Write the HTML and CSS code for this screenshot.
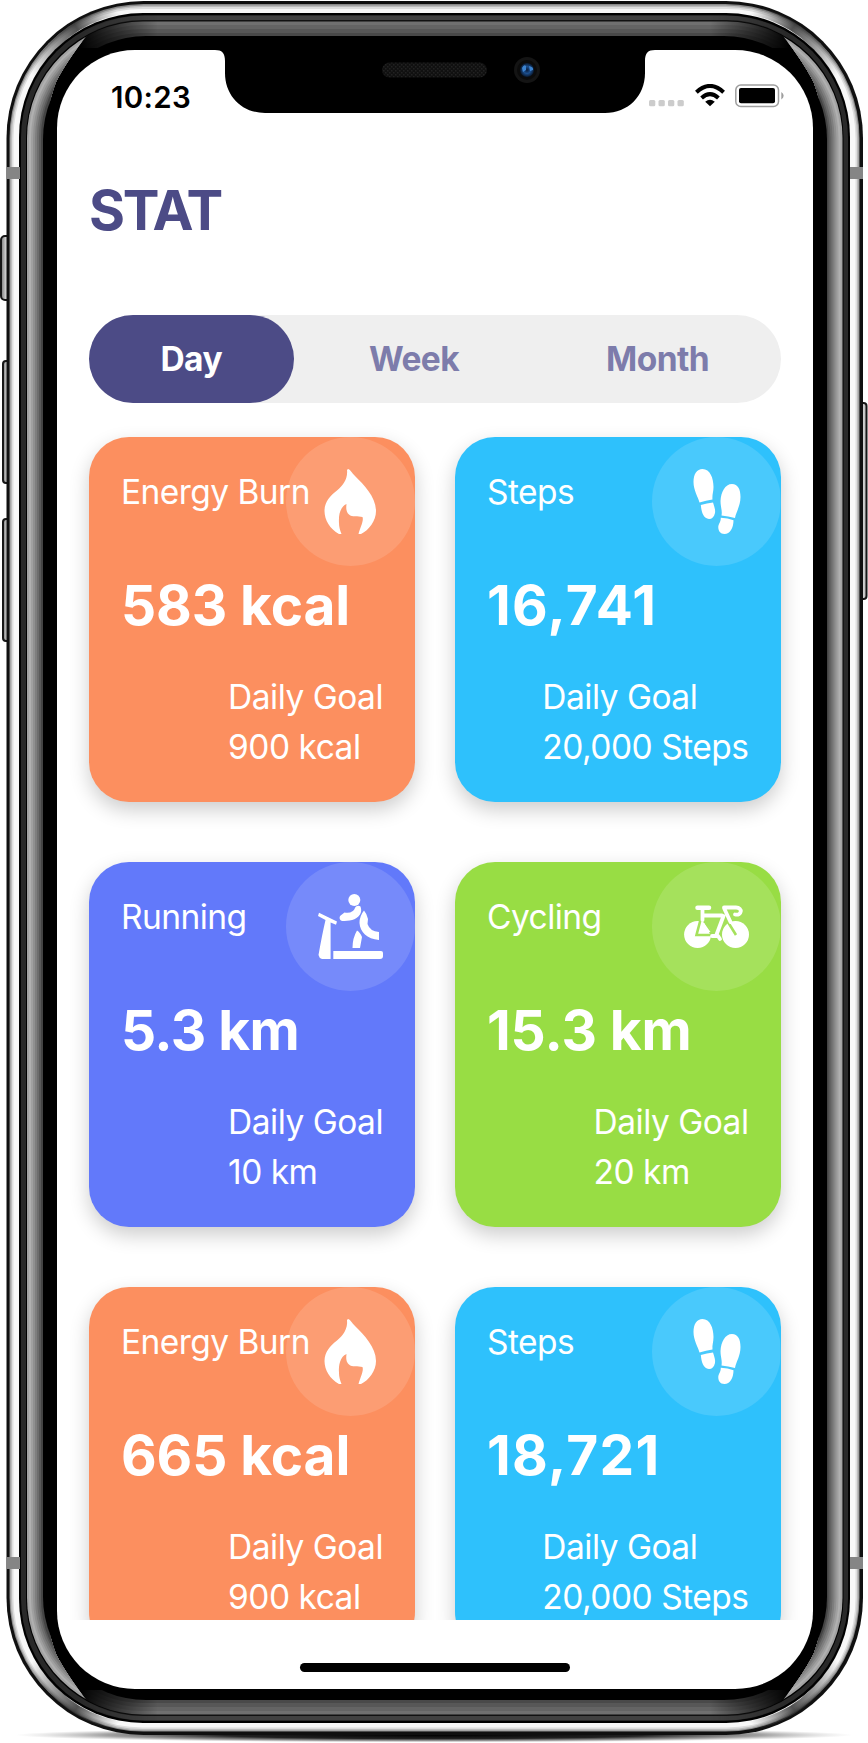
FILE: index.html
```
<!DOCTYPE html>
<html lang="en">
<head>
<meta charset="utf-8">
<meta name="viewport" content="width=device-width, initial-scale=1">
<title>Stat</title>
<link rel="stylesheet" href="styles.css">
</head>
<body>
<svg class="sprite" aria-hidden="true">
  <symbol id="flame" viewBox="0 0 65 65"><path d="M30 0C32 0 34 4 37 7C46 16 58 28 58 42C58 52 51 61 43 65L40.500 65C42 59 46 52 44.500 48C40 47 34 48.500 31 45.500C28 43 28 39 28.500 35C22 38 20.500 46 21 54C21 58 22 61 23.500 65L21 65C12 60 6.500 51 6.500 42C6.500 33 12 27 19 21.500C25 16.500 30 10 29 1Z"/></symbol>
  <symbol id="steps" viewBox="0 0 65 65"><path d="M15.500 33.500C14 28 9.500 21 9.500 13C9.500 5 13 0 18.500 0C26 0 29.500 9 29.500 18C29.500 23 28 26 28.500 30.500Q22 31.500 15.500 33.500ZM16.800 36Q23 34 29 33.400C30.500 38 31.500 41 31 44C30 48 28 50 25 50C19 49 17.500 43 16.800 36ZM37.500 46.500C38.500 42 36.500 38 36.500 32C37 23 41 15 48 15C54 15.500 56.500 20 56.500 28C56.500 37 52 43 51 49Q44 47 37.500 46.500ZM36.800 48.700Q44 49 49.500 51.200C49.500 59 46 65 40.500 65C36 65 34 61.500 34.300 57.500C35 54 36.800 53 36.800 48.700Z"/></symbol>
  <symbol id="treadmill" viewBox="0 0 65 65"><circle cx="36.300" cy="6" r="6"/><path d="M37.500 13Q40 11 42.500 12.500Q44 17 42 20.500C38 26.500 31 27 24 27Q20.500 25.500 22 22L26.500 18.500Q35 20 37.500 13ZM46 16.500Q49 20 50 25L49.500 30Q52 37.500 61 38V46C49 45 42 38 41.500 29Q41.500 22 46 16.500ZM39 36.500Q42 38 44 43L42 54H34.500Q34.500 44 39 36.500ZM1 18.800L19 27.500L18 30.800L12.600 28.500V65H4Q1 64 .5 61Q4 41 7.500 26L0 22Z"/><path d="M15.300 57H63Q65 57 65 59V62Q65 65 62 65H15.300Z"/></symbol>
  <symbol id="bike" viewBox="0 0 65 65">
    <mask id="wheels"><path fill="#fff" d="M0 0H65V65H0Z"/><g fill="none" stroke="#000" stroke-width="2.600"><path d="M17 24L12.500 41H28M19 24L28 41M39 20L52 41"/></g></mask>
    <g mask="url(#wheels)"><circle cx="13.600" cy="40.500" r="13.500"/><circle cx="51.500" cy="40.500" r="13.500"/></g>
    <g fill="none" stroke="#fff" stroke-width="3.800" stroke-linecap="round" stroke-linejoin="round"><path stroke-width="4.500" d="M13.500 13.800H25"/><path d="M18.500 15V26M18.500 21.500H38M40 13.500H52C59 13.500 58 22 51 20.500M40 14L46.500 28M39.500 22L32 42M28 42H34L36 45"/></g>
    <path d="M20 29L26.500 38H18Z"/>
  </symbol>
</svg>

<main class="device">
  <svg class="shell" viewBox="0 0 868 1743" aria-hidden="true">
    <defs>
      <radialGradient id="ground"><stop offset="0" stop-color="#000"/><stop offset=".5" stop-color="#222"/><stop offset=".78" stop-color="#888" stop-opacity=".8"/><stop offset="1" stop-color="#bbb" stop-opacity="0"/></radialGradient>
      <linearGradient id="key" x1="0" x2="1"><stop offset="0" stop-color="#777"/><stop offset=".5" stop-color="#d5d5d5"/><stop offset="1" stop-color="#b5b5b5"/></linearGradient>
      <linearGradient id="edgeFade" x1="80" x2="788" y1="0" y2="0" gradientUnits="userSpaceOnUse"><stop offset="0" stop-color="#000"/><stop offset=".11" stop-color="#fff"/><stop offset=".89" stop-color="#fff"/><stop offset="1" stop-color="#000"/></linearGradient>
      <linearGradient id="smear" x1="30" y1="72" x2="115" y2="8" gradientUnits="userSpaceOnUse"><stop offset="0" stop-color="#333" stop-opacity="0"/><stop offset=".6" stop-color="#333" stop-opacity=".85"/><stop offset="1" stop-color="#555" stop-opacity="0"/></linearGradient>
      <mask id="ends" maskUnits="userSpaceOnUse" x="0" y="0" width="868" height="1743"><path fill="url(#edgeFade)" d="M80 0H788V48H80ZM80 1690H788V1743H80Z"/></mask>
      <clipPath id="sides"><path d="M0 0H88V34Q66 62 56 82Q46 108 43 150V1586Q46 1628 56 1654Q66 1674 88 1702V1743H0ZM869.500 0H781.500V34Q803.500 62 813.500 82Q823.500 108 826.500 150V1586Q823.500 1628 813.500 1654Q803.500 1674 781.500 1702V1743H869.500Z"/></clipPath>
      <pattern id="mesh" width="4" height="4" patternUnits="userSpaceOnUse"><path fill="#101010" d="M0 0H4V4H0Z"/><path fill="#222" d="M0 0H1.500V1.500H0ZM2 2H3.500V3.500H2Z"/></pattern>
      <radialGradient id="lens"><stop offset="0" stop-color="#0a1c3a"/><stop offset=".5" stop-color="#1c4f8e"/><stop offset="1" stop-color="#09182e"/></radialGradient>
      <g id="corner"><path fill="none" stroke="url(#smear)" stroke-width="9" d="M15 146C15 74 64 9 140 8.500"/></g>
    </defs>
    <ellipse cx="434" cy="1735" rx="419" ry="7.500" fill="url(#ground)"/>
    <g stroke="#171717" stroke-width="2" fill="url(#key)">
      <rect x="1" y="236" width="10" height="64" rx="4"/><rect x="3" y="361" width="8" height="122" rx="3"/><rect x="3" y="519" width="8" height="122" rx="3"/><rect x="859" y="403" width="7.500" height="196" rx="3"/>
    </g>
    <rect x="6.500" y="1" width="856.500" height="1734" rx="137" fill="#101010"/>
    <rect x="9.500" y="4" width="850" height="1727.500" rx="134" fill="#8b8b8b"/>
    <rect x="10.500" y="5.500" width="848" height="1725" rx="133" fill="#bdbdbd"/>
    <rect x="12" y="7" width="845" height="1722" rx="131" fill="#dedede"/>
    <rect x="13.500" y="9" width="842" height="1718.500" rx="129" fill="#f8f8f8"/>
    <use href="#corner"/><use href="#corner" transform="matrix(-1 0 0 1 869.500 0)"/><use href="#corner" transform="matrix(1 0 0 -1 0 1736)"/><use href="#corner" transform="matrix(-1 0 0 -1 869.500 1736)"/>
    <rect x="19" y="13" width="831" height="1710" rx="124" fill="#000"/>
    <rect x="21" y="15.500" width="827" height="1705" rx="122" fill="#292929"/>
    <rect x="26" y="20.500" width="817.500" height="1695" rx="117" fill="#000"/>
    <g clip-path="url(#sides)">
      <rect x="27" y="22" width="815.500" height="1692" rx="116" fill="#a2a2a2"/><rect x="29" y="24" width="811.500" height="1688" rx="114" fill="#b0b0b0"/><rect x="31" y="26" width="807.500" height="1684" rx="112" fill="#a0a0a0"/><rect x="33" y="28" width="803.500" height="1680" rx="110" fill="#909090"/><rect x="35" y="30" width="799.500" height="1676" rx="108" fill="#7e7e7e"/><rect x="37" y="32" width="795.500" height="1672" rx="106" fill="#6d6d6d"/><rect x="39" y="34" width="791.500" height="1668" rx="104" fill="#5a5a5a"/><rect x="41" y="35" width="787.500" height="1666" rx="102" fill="#444"/>
    </g>
    <g mask="url(#ends)">
      <rect x="27" y="15.500" width="815.500" height="1705" rx="118" fill="#414141"/><rect x="27" y="20" width="815.500" height="1696" rx="116" fill="#111"/><rect x="27" y="21.500" width="815.500" height="1693" rx="116" fill="#707070"/><rect x="29" y="25" width="811.500" height="1686" rx="114" fill="#646464"/><rect x="33" y="29" width="803.500" height="1678" rx="110" fill="#575757"/><rect x="37" y="33" width="795.500" height="1670" rx="106" fill="#494949"/>
    </g>
    <rect x="43" y="36" width="784" height="1664" rx="103" fill="#000"/>
    <g fill="#858585"><path d="M7 167H20V179H7ZM850 167H863V179H850ZM7 1557H20V1569H7ZM850 1557H863V1569H850Z"/></g>
  </svg>

  <section class="screen">
    <svg class="notch" viewBox="0 0 440 64" aria-hidden="true">
      <path d="M0 0H440C433 0 430 3 430 11V23C430 46 413 63 390 63H50C27 63 10 46 10 23V11C10 3 7 0 0 0Z"/>
      <rect x="167" y="12.500" width="105" height="15" rx="7.500" fill="url(#mesh)"/>
      <circle cx="312" cy="20" r="13" fill="#141414"/><circle cx="312" cy="20" r="10" fill="#0b0b0b"/><circle cx="312" cy="20" r="7" fill="url(#lens)"/><path fill="#3c83cf" d="M307 18Q309 14 311 16V20L308 22ZM314 16Q319 17 318 20L315 21Z"/>
    </svg>

    <header class="status">
      <time class="clock">10:23</time>
      <div class="signals">
        <svg width="36" height="23" viewBox="0 0 36 23" fill="#ccc"><rect x="0" y="16" width="6.300" height="6.300" rx="1.500"/><rect x="9.500" y="16" width="6.300" height="6.300" rx="1.500"/><rect x="19" y="16" width="6.300" height="6.300" rx="1.500"/><rect x="28.500" y="16" width="6.300" height="6.300" rx="1.500"/></svg>
        <svg width="30" height="23" viewBox="0 0 30 23"><path fill="none" stroke="#000" stroke-width="4" d="M1.400 8.200Q15-4.300 28.600 8.200M6.600 14Q15 6.300 23.400 14"/><path d="M15 22.300L10.200 17.700Q15 13.700 19.800 17.700Z"/></svg>
        <svg width="50" height="24" viewBox="0 0 50 24"><rect x=".8" y="1" width="42.700" height="21.400" rx="5" fill="none" stroke="#9e9e9e" stroke-width="1.500"/><rect x="4" y="4" width="36" height="15.300" rx="2"/><path fill="#9e9e9e" d="M46.300 8Q51 11.700 46.300 15.500Z"/></svg>
      </div>
    </header>

    <h1 class="title">STAT</h1>

    <nav class="tabs">
      <a class="tab tab-active">Day</a>
      <a class="tab">Week</a>
      <a class="tab">Month</a>
    </nav>

    <div class="scroller">
      <div class="grid">
        <article class="card energy">
          <span class="badge"><svg><use href="#flame"/></svg></span>
          <h2 class="name">Energy Burn</h2><p class="value">583 kcal</p><p class="goal">Daily Goal<br>900 kcal</p>
        </article>
        <article class="card steps">
          <span class="badge"><svg><use href="#steps"/></svg></span>
          <h2 class="name">Steps</h2><p class="value value-count">16,741</p><p class="goal">Daily Goal<br>20,000 Steps</p>
        </article>
        <article class="card running">
          <span class="badge"><svg><use href="#treadmill"/></svg></span>
          <h2 class="name">Running</h2><p class="value value-short">5.3 km</p><p class="goal">Daily Goal<br>10 km</p>
        </article>
        <article class="card cycling">
          <span class="badge"><svg><use href="#bike"/></svg></span>
          <h2 class="name">Cycling</h2><p class="value">15.3 km</p><p class="goal">Daily Goal<br>20 km</p>
        </article>
        <article class="card energy">
          <span class="badge"><svg><use href="#flame"/></svg></span>
          <h2 class="name">Energy Burn</h2><p class="value">665 kcal</p><p class="goal">Daily Goal<br>900 kcal</p>
        </article>
        <article class="card steps">
          <span class="badge"><svg><use href="#steps"/></svg></span>
          <h2 class="name">Steps</h2><p class="value value-count">18,721</p><p class="goal">Daily Goal<br>20,000 Steps</p>
        </article>
      </div>
    </div>
    <footer class="home"><span class="home-bar"></span></footer>
  </section>
</main>
</body>
</html>
```
FILE: styles.css
```
* { box-sizing: border-box; margin: 0; padding: 0; }

body {
  background: #fff;
  font-family: Inter, "Liberation Sans", sans-serif;
  overflow: hidden;
}

.sprite { display: block; width: 0; height: 0; position: absolute; }

.device {
  position: relative;
  width: 868px;
  height: 1743px;
  padding: 50px 55px 54px 57px;
}

.shell { position: absolute; inset: 0; width: 868px; height: 1743px; }

.screen {
  position: relative;
  display: flex;
  flex-direction: column;
  height: 1639px;
  background: #fff;
  border-radius: 78px;
  overflow: hidden;
}

.notch { position: absolute; left: 158px; top: 0; width: 440px; height: 64px; }

.status {
  display: flex;
  justify-content: space-between;
  height: 112px;
  padding: 34px 28px 0 54px;
}
.clock { font-size: 29.500px; line-height: 26px; font-weight: 600; letter-spacing: .3px; }
.signals { display: flex; gap: 9.500px; height: 24px; }
.signals svg { display: block; }
.signals svg:last-child { margin-left: 1px; }

.title {
  height: 153px;
  padding-left: 32px;
  font-size: 55px;
  line-height: 97px;
  font-weight: 700;
  color: #4c4b86;
  letter-spacing: -2.200px;
}

.tabs {
  display: grid;
  grid-template-columns: 204.500px 241px 1fr;
  flex: none;
  height: 87.500px;
  margin: 0 32.500px 0 32px;
  background: #efefef;
  border-radius: 44px;
}
.tab {
  display: flex;
  align-items: center;
  justify-content: center;
  border-radius: 44px;
  font-size: 33.500px;
  font-weight: 700;
  letter-spacing: -.6px;
  color: #7d7cab;
}
.tab-active { background: #4c4b86; color: #fff; }

.scroller { height: 1217.500px; flex: none; overflow: hidden; }

.grid {
  display: grid;
  grid-template-columns: 326px 325.500px;
  grid-auto-rows: 364.500px;
  gap: 60.500px 40px;
  padding: 34.500px 32px 0;
}

.card {
  position: relative;
  display: flex;
  flex-direction: column;
  padding: 31px 32px 32px;
  border-radius: 40px;
  color: #fff;
  box-shadow: 0 8px 20px rgba(0, 0, 0, .2);
}
.energy { background: #fc8f5f; }
.steps { background: #2ec1fc; }
.running { background: #6279fa; }
.cycling { background: #98dd44; }

.badge {
  position: absolute;
  top: 0;
  right: 0;
  display: grid;
  place-items: center;
  width: 129px;
  height: 129px;
  border-radius: 50%;
  background: rgba(255, 255, 255, .13);
  clip-path: inset(0 0 0 0 round 0 40px 0 0);
}
.badge svg { width: 65px; height: 65px; fill: #fff; }

.name { position: relative; font-size: 33.500px; line-height: 48px; font-weight: 370; letter-spacing: -.55px; }
.value { margin-top: 56px; font-size: 55px; line-height: 66px; font-weight: 700; letter-spacing: -.1px; }
.value-count { letter-spacing: 1.300px; }
.value-short { letter-spacing: -.6px; }
.goal { align-self: flex-end; margin-top: 34px; font-size: 33.500px; line-height: 50px; font-weight: 370; letter-spacing: -.5px; }

.home { display: flex; justify-content: center; padding-top: 42.500px; }
.home-bar { width: 270px; height: 9.500px; border-radius: 5px; background: #000; }
```
